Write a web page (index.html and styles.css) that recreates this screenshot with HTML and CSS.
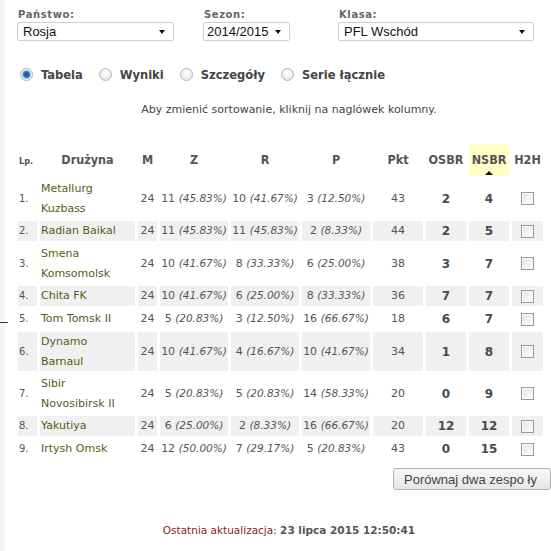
FILE: index.html
```html
<!DOCTYPE html>
<html lang="pl">
<head>
<meta charset="utf-8">
<title>Tabela</title>
<link rel="stylesheet" href="styles.css">
</head>
<body>
<div class="page">
  <div class="edge-mark"></div>
  <div class="filters">
    <div class="field f1">
      <div class="label">Państwo:</div>
      <div class="select w1"><span>Rosja</span><i class="caret"></i></div>
    </div>
    <div class="field f2">
      <div class="label">Sezon:</div>
      <div class="select w2"><span>2014/2015</span><i class="caret"></i></div>
    </div>
    <div class="field f3">
      <div class="label">Klasa:</div>
      <div class="select w3"><span>PFL Wschód</span><i class="caret"></i></div>
    </div>
  </div>

  <div class="modes">
    <label class="mode"><span class="radio checked"></span>Tabela</label>
    <label class="mode"><span class="radio"></span>Wyniki</label>
    <label class="mode"><span class="radio"></span>Szczegóły</label>
    <label class="mode"><span class="radio"></span>Serie łącznie</label>
  </div>

  <p class="hint">Aby zmienić sortowanie, kliknij na naglówek kolumny.</p>

  <table class="standings">
    <colgroup>
      <col class="c-lp"><col class="c-team"><col class="c-m"><col class="c-z"><col class="c-z"><col class="c-z"><col class="c-pkt"><col class="c-sb"><col class="c-sb"><col class="c-h2h">
    </colgroup>
    <thead>
      <tr>
        <th class="lp">Lp.</th><th>Drużyna</th><th>M</th><th>Z</th><th>R</th><th>P</th><th>Pkt</th><th>OSBR</th><th class="sorted">NSBR<i class="sort-arrow"></i></th><th>H2H</th>
      </tr>
    </thead>
    <tbody>
      <tr><td class="lp">1.</td><td class="team">Metallurg<br>Kuzbass</td><td>24</td><td>11 <em>(45.83%)</em></td><td>10 <em>(41.67%)</em></td><td>3 <em>(12.50%)</em></td><td>43</td><td class="b">2</td><td class="b">4</td><td><span class="cb"></span></td></tr>
      <tr class="alt"><td class="lp">2.</td><td class="team">Radian Baikal</td><td>24</td><td>11 <em>(45.83%)</em></td><td>11 <em>(45.83%)</em></td><td>2 <em>(8.33%)</em></td><td>44</td><td class="b">2</td><td class="b">5</td><td><span class="cb"></span></td></tr>
      <tr><td class="lp">3.</td><td class="team">Smena<br>Komsomolsk</td><td>24</td><td>10 <em>(41.67%)</em></td><td>8 <em>(33.33%)</em></td><td>6 <em>(25.00%)</em></td><td>38</td><td class="b">3</td><td class="b">7</td><td><span class="cb"></span></td></tr>
      <tr class="alt"><td class="lp">4.</td><td class="team">Chita FK</td><td>24</td><td>10 <em>(41.67%)</em></td><td>6 <em>(25.00%)</em></td><td>8 <em>(33.33%)</em></td><td>36</td><td class="b">7</td><td class="b">7</td><td><span class="cb"></span></td></tr>
      <tr><td class="lp">5.</td><td class="team">Tom Tomsk II</td><td>24</td><td>5 <em>(20.83%)</em></td><td>3 <em>(12.50%)</em></td><td>16 <em>(66.67%)</em></td><td>18</td><td class="b">6</td><td class="b">7</td><td><span class="cb"></span></td></tr>
      <tr class="alt"><td class="lp">6.</td><td class="team">Dynamo<br>Barnaul</td><td>24</td><td>10 <em>(41.67%)</em></td><td>4 <em>(16.67%)</em></td><td>10 <em>(41.67%)</em></td><td>34</td><td class="b">1</td><td class="b">8</td><td><span class="cb"></span></td></tr>
      <tr><td class="lp">7.</td><td class="team">Sibir<br>Novosibirsk II</td><td>24</td><td>5 <em>(20.83%)</em></td><td>5 <em>(20.83%)</em></td><td>14 <em>(58.33%)</em></td><td>20</td><td class="b">0</td><td class="b">9</td><td><span class="cb"></span></td></tr>
      <tr class="alt"><td class="lp">8.</td><td class="team">Yakutiya</td><td>24</td><td>6 <em>(25.00%)</em></td><td>2 <em>(8.33%)</em></td><td>16 <em>(66.67%)</em></td><td>20</td><td class="b">12</td><td class="b">12</td><td><span class="cb"></span></td></tr>
      <tr><td class="lp">9.</td><td class="team">Irtysh Omsk</td><td>24</td><td>12 <em>(50.00%)</em></td><td>7 <em>(29.17%)</em></td><td>5 <em>(20.83%)</em></td><td>43</td><td class="b">0</td><td class="b">15</td><td><span class="cb"></span></td></tr>
    </tbody>
  </table>

  <div class="actions">
    <button class="compare" type="button">Porównaj dwa zespo ły</button>
  </div>

  <p class="updated"><span class="upd-label">Ostatnia aktualizacja:</span> <b>23 lipca 2015 12:50:41</b></p>
</div>
</body>
</html>
```
FILE: styles.css
```css
html, body {
  margin: 0;
  padding: 0;
  background: #ffffff;
}
body {
  font-family: "DejaVu Sans", Verdana, sans-serif;
  color: #555;
  width: 551px;
  height: 551px;
  overflow: hidden;
}
.page {
  position: relative;
  height: 551px;
  border-left: 5px solid #f5f5f5;
  box-sizing: border-box;
  padding-top: 8px;
}
.edge-mark {
  position: absolute;
  left: -5px;
  top: 322px;
  width: 8px;
  height: 1px;
  background: #333;
}

/* filters */
.filters {
  display: grid;
  grid-template-columns: 186px 135px 200px;
  margin-left: 12px;
}
.label {
  font-weight: bold;
  font-size: 10px;
  letter-spacing: 0.6px;
  line-height: 13px;
  color: #666;
  padding-left: 1px;
}
.select {
  margin-top: 1px;
  height: 19px;
  box-sizing: border-box;
  border: 1px solid #cfcfcf;
  border-radius: 2px;
  background: #fff;
  display: flex;
  align-items: center;
  justify-content: space-between;
  padding: 0 8px 0 5px;
  font-family: "Liberation Sans", Arial, sans-serif;
  font-size: 13px;
  color: #111;
}
.w1 { width: 157px; }
.w2 { width: 87px; padding-left: 3px; }
.w3 { width: 196px; }
.caret {
  width: 0;
  height: 0;
  border-left: 3.5px solid transparent;
  border-right: 3.5px solid transparent;
  border-top: 4px solid #111;
  margin-top: 1px;
}

/* mode radios */
.modes {
  display: flex;
  margin: 25px 0 0 15px;
  height: 16px;
  align-items: center;
}
.mode {
  display: flex;
  align-items: center;
  font-family: "DejaVu Sans Condensed", "DejaVu Sans", sans-serif;
  font-stretch: condensed;
  font-weight: bold;
  font-size: 12.8px;
  color: #444;
  margin-right: 16px;
}
.radio {
  width: 11px;
  height: 11px;
  border-radius: 50%;
  border: 1px solid #b5b5b5;
  background: radial-gradient(circle at 50% 40%, #ffffff 0%, #eeeeee 55%, #d8d8d8 100%);
  margin-right: 8px;
}
.radio.checked {
  border-color: #a7b3c2;
  background: radial-gradient(circle at 50% 50%, #1d4f8c 0px, #2a69b0 2.5px, #5f8fc4 3.5px, #e8eef5 4.5px, #dfe5ec 100%);
}

/* hint */
.hint {
  margin: 22px 0 0 0;
  width: 568px;
  text-align: center;
  font-size: 11px;
  line-height: 12px;
  color: #444;
}

/* table */
.standings {
  margin: 25px 0 0 10px;
  border-collapse: separate;
  border-spacing: 3px;
  table-layout: fixed;
  width: 531px;
  font-size: 11px;
}
.c-lp { width: 19px; }
.c-team { width: 95px; }
.c-m { width: 19px; }
.c-z { width: 68px; }
.c-pkt { width: 50px; }
.c-sb { width: 40px; }
.c-h2h { width: 31px; }

.standings th {
  height: 30px;
  padding: 0;
  font-family: "DejaVu Sans Condensed", "DejaVu Sans", sans-serif;
  font-stretch: condensed;
  font-weight: bold;
  font-size: 12.5px;
  line-height: 14px;
  color: #555;
  text-align: center;
  vertical-align: middle;
  white-space: nowrap;
  position: relative;
}
.standings th.lp {
  font-size: 9px;
  text-align: left;
  padding-left: 1px;
  padding-top: 2px;
}
.standings th.sorted {
  background: #ffffc8;
}
.sort-arrow {
  position: absolute;
  left: 50%;
  bottom: 1px;
  margin-left: -4px;
  width: 0;
  height: 0;
  border-left: 4px solid transparent;
  border-right: 4px solid transparent;
  border-bottom: 4px solid #111;
}
.standings td {
  padding: 0;
  height: 20px;
  line-height: 20px;
  text-align: center;
  vertical-align: middle;
  white-space: nowrap;
  color: #555;
}
.standings tr.alt td {
  background: #f0f0f0;
}
.standings td.lp {
  text-align: left;
  padding-left: 1px;
  font-size: 10px;
}
.standings td.team {
  text-align: left;
  padding-left: 1px;
  color: #4e5f17;
  white-space: normal;
  line-height: 19.5px;
}
.standings em {
  font-style: italic;
  font-size: 10.5px;
  line-height: 1;
}
.standings td.b {
  font-weight: bold;
  font-size: 12px;
  color: #4a4a4a;
}
.cb {
  display: block;
  margin: 0 auto;
  width: 11px;
  height: 11px;
  border: 1px solid #9a9a9a;
  background: linear-gradient(135deg, #e4e4e4 0%, #f4f4f4 60%, #ffffff 100%);
  box-shadow: inset 0 0 0 1px #f8f8f8;
}

/* actions */
.actions {
  display: flex;
  justify-content: flex-end;
  margin-top: 6px;
}
.compare {
  width: 158px;
  height: 22px;
  margin: 0;
  border: 1px solid #b4b4b4;
  border-radius: 3px;
  background: linear-gradient(#f8f8f8, #e6e6e6);
  font-family: "Liberation Sans", Arial, sans-serif;
  font-size: 13px;
  color: #444;
  text-align: left;
  padding: 0 0 0 10px;
}

/* footer */
.updated {
  margin: 33px 0 0 0;
  width: 568px;
  text-align: center;
  font-size: 10.5px;
  line-height: 14px;
  color: #444;
}
.upd-label {
  color: #8e1b1b;
}
.updated b {
  color: #555;
}
```
